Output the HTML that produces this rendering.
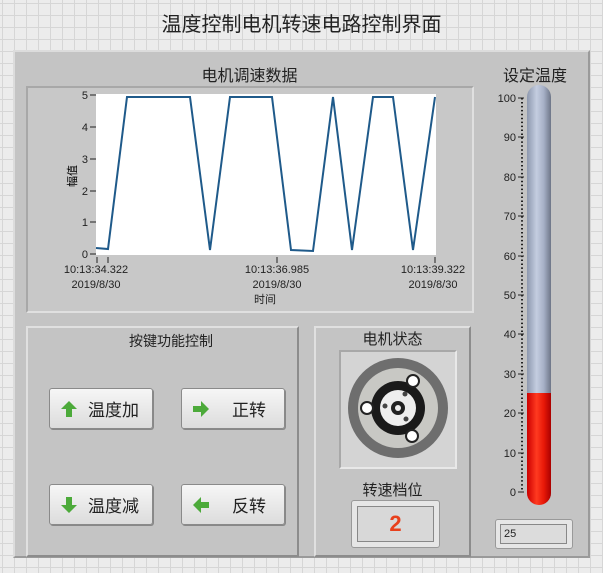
<!DOCTYPE html>
<html><head><meta charset="utf-8"><style>
*{margin:0;padding:0;box-sizing:border-box}
body{width:603px;height:573px;overflow:hidden;font-family:"Liberation Sans","Noto Sans CJK SC",sans-serif;color:#222;
background-color:#ececec;background-image:linear-gradient(#d6d6d6 1px,transparent 1px),linear-gradient(90deg,#d6d6d6 1px,transparent 1px);background-size:12px 12px;background-position:2px 3px;position:relative}
.a{position:absolute}
.panel{background:#c4c4c4;border:2px solid;border-color:#dcdcdc #9a9a9a #9a9a9a #dcdcdc}
.sub{background:#c0c0c0;border:2px solid;border-color:#a8a8a8 #e0e0e0 #e0e0e0 #a8a8a8}
.btn{background:linear-gradient(#f6f6f6,#dcdcdc);border:1px solid #8a8a8a;border-radius:3px;box-shadow:1px 1px 0 #888;font-size:17px;display:flex;align-items:center}
.lbl{font-size:15px;text-align:center}
.ic{display:inline-block;width:18px;height:18px}
</style></head><body>
<div class="a" style="left:0;top:8px;width:603px;text-align:center;font-size:20px">温度控制电机转速电路控制界面</div>
<div class="a panel" style="left:13px;top:50px;width:577px;height:508px"></div>
<div class="a lbl" style="left:26px;top:62px;width:447px;font-size:16px">电机调速数据</div>
<div class="a sub" style="left:26px;top:86px;width:448px;height:227px;background:#c8c8c8"></div>
<svg class="a" style="left:0;top:0" width="603" height="573">
<rect x="96" y="94" width="340" height="161" fill="#fff"/>
<polyline fill="none" stroke="#1f5a8a" stroke-width="2" points="96,248 108,249 127,97 190,97 210,250 230,97 272,97 291,250 313,251 333,97 352,250 373,97 393,97 413,250 435,97"/>
<g stroke="#222" stroke-width="1">
<line x1="90" y1="95" x2="96" y2="95"/><line x1="90" y1="127" x2="96" y2="127"/><line x1="90" y1="159" x2="96" y2="159"/><line x1="90" y1="191" x2="96" y2="191"/><line x1="90" y1="222" x2="96" y2="222"/><line x1="90" y1="254" x2="96" y2="254"/>
<line x1="97" y1="257" x2="97" y2="263"/><line x1="108" y1="257" x2="108" y2="263"/><line x1="277" y1="257" x2="277" y2="263"/><line x1="435" y1="257" x2="435" y2="263"/>
</g>
<g font-size="11" text-anchor="end" fill="#222"><text x="88" y="99">5</text><text x="88" y="131">4</text><text x="88" y="163">3</text><text x="88" y="195">2</text><text x="88" y="226">1</text><text x="88" y="258">0</text></g>
<g font-size="11" text-anchor="middle" fill="#222"><text x="96" y="273">10:13:34.322</text><text x="96" y="288">2019/8/30</text><text x="277" y="273">10:13:36.985</text><text x="277" y="288">2019/8/30</text><text x="433" y="273">10:13:39.322</text><text x="433" y="288">2019/8/30</text><text x="265" y="303">时间</text></g>
<text x="0" y="0" font-size="11" transform="translate(76,176) rotate(-90)" text-anchor="middle">幅值</text>
</svg>
<div class="a panel" style="left:26px;top:326px;width:273px;height:231px;border-color:#e0e0e0 #8c8c8c #8c8c8c #e0e0e0"></div>
<div class="a lbl" style="left:26px;top:331px;width:290px;font-size:14px">按键功能控制</div>
<div class="a btn" style="left:49px;top:388px;width:104px;height:41px"><svg class="ic" style="margin:0 10px" viewBox="0 0 18 18"><path d="M9 1 L17 9 H12 V17 H6 V9 H1 Z" fill="#4caa3a"/></svg>温度加</div>
<div class="a btn" style="left:181px;top:388px;width:104px;height:41px"><svg class="ic" style="margin:0 22px 0 10px" viewBox="0 0 18 18"><path d="M17 9 L9 1 V6 H1 V12 H9 V17 Z" fill="#4caa3a"/></svg>正转</div>
<div class="a btn" style="left:49px;top:484px;width:104px;height:41px"><svg class="ic" style="margin:0 10px" viewBox="0 0 18 18"><path d="M9 17 L17 9 H12 V1 H6 V9 H1 Z" fill="#4caa3a"/></svg>温度减</div>
<div class="a btn" style="left:181px;top:484px;width:104px;height:41px"><svg class="ic" style="margin:0 22px 0 10px" viewBox="0 0 18 18"><path d="M1 9 L9 1 V6 H17 V12 H9 V17 Z" fill="#4caa3a"/></svg>反转</div>
<div class="a panel" style="left:314px;top:326px;width:157px;height:231px;border-color:#e0e0e0 #8c8c8c #8c8c8c #e0e0e0"></div>
<div class="a lbl" style="left:314px;top:328px;width:157px">电机状态</div>
<div class="a" style="left:339px;top:350px;width:118px;height:119px;background:#d4d4d4;border:2px solid;border-color:#a8a8a8 #e8e8e8 #e8e8e8 #a8a8a8"></div>
<svg class="a" style="left:0;top:0" width="603" height="573">
<circle cx="398" cy="408" r="50" fill="#6e6e6e"/><circle cx="398" cy="408" r="40" fill="#c8c8c4"/>
<circle cx="398" cy="408" r="27" fill="#1a1a1a"/><circle cx="398" cy="408" r="18" fill="#eee"/>
<circle cx="398" cy="408" r="7" fill="#222"/><circle cx="398" cy="408" r="3" fill="#eee"/>
<circle cx="413" cy="381" r="6" fill="#fff" stroke="#222" stroke-width="2"/><circle cx="367" cy="408" r="6" fill="#fff" stroke="#222" stroke-width="2"/><circle cx="412" cy="436" r="6" fill="#fff" stroke="#222" stroke-width="2"/>
<circle cx="385" cy="406" r="2.5" fill="#444"/><circle cx="405" cy="394" r="2.5" fill="#444"/><circle cx="406" cy="419" r="2.5" fill="#444"/>
</svg>
<div class="a lbl" style="left:314px;top:479px;width:157px">转速档位</div>
<div class="a" style="left:351px;top:500px;width:89px;height:48px;background:#e6e6e6;border:1px solid #999;border-radius:3px"></div>
<div class="a" style="left:357px;top:506px;width:77px;height:36px;background:#d8d8d8;border:1px solid #888;color:#e8401c;font-weight:bold;font-size:22px;text-align:center;line-height:34px">2</div>
<div class="a lbl" style="left:490px;top:62px;width:90px;font-size:16px">设定温度</div>
<div class="a" style="left:527px;top:85px;width:24px;height:420px;border-radius:12px;background:linear-gradient(90deg,#8d98ae,#c4cde0 40%,#a6b0c6 70%,#6e7688)"></div>
<div class="a" style="left:527px;top:393px;width:24px;height:112px;border-radius:0 0 12px 12px;background:linear-gradient(90deg,#c00,#ff3a20 40%,#e81808 70%,#a00)"></div>
<svg class="a" style="left:0;top:0" width="603" height="573">
<g stroke="#222" stroke-width="1">
<line x1="518" y1="98" x2="524" y2="98"/><line x1="518" y1="137" x2="524" y2="137"/><line x1="518" y1="177" x2="524" y2="177"/><line x1="518" y1="216" x2="524" y2="216"/><line x1="518" y1="256" x2="524" y2="256"/><line x1="518" y1="295" x2="524" y2="295"/><line x1="518" y1="334" x2="524" y2="334"/><line x1="518" y1="374" x2="524" y2="374"/><line x1="518" y1="413" x2="524" y2="413"/><line x1="518" y1="453" x2="524" y2="453"/><line x1="518" y1="492" x2="524" y2="492"/>
</g>
<line x1="522" y1="98" x2="522" y2="492" stroke="#222" stroke-width="2" stroke-dasharray="1.5 2.44"/>
<g font-size="11" text-anchor="end" fill="#222"><text x="516" y="102">100</text><text x="516" y="141">90</text><text x="516" y="181">80</text><text x="516" y="220">70</text><text x="516" y="260">60</text><text x="516" y="299">50</text><text x="516" y="338">40</text><text x="516" y="378">30</text><text x="516" y="417">20</text><text x="516" y="457">10</text><text x="516" y="496">0</text></g>
</svg>
<div class="a" style="left:495px;top:519px;width:78px;height:30px;background:#e6e6e6;border:1px solid #999;border-radius:3px"></div>
<div class="a" style="left:500px;top:524px;width:67px;height:20px;background:#dcdcdc;border:1px solid #888;font-size:11px;line-height:18px;padding-left:3px">25</div>
</body></html>
